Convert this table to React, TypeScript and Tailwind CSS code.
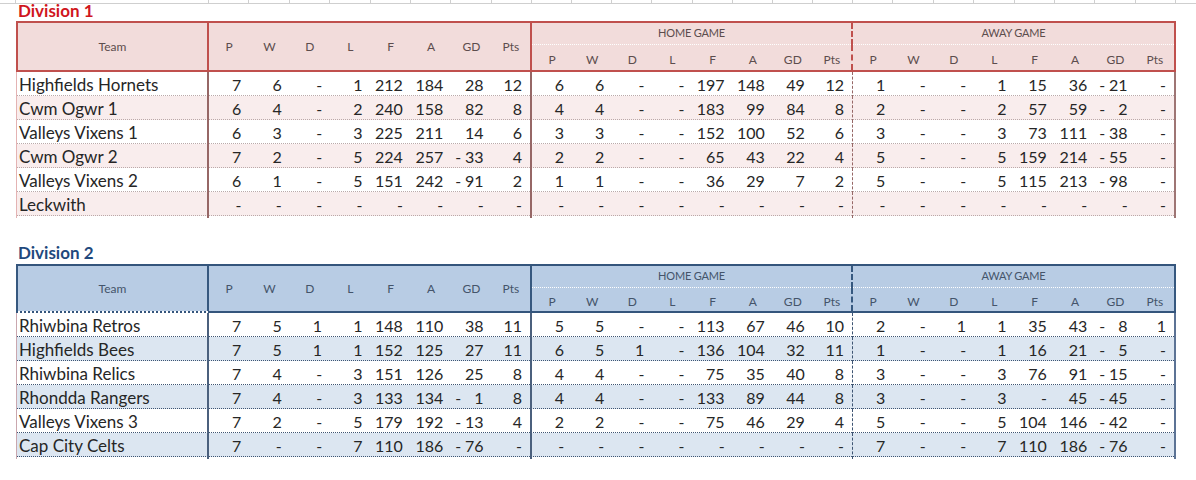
import React from 'react';

type Theme = {
  title: string;
  bar: string;
  teamBar: string;
  headRows: string;
  headBg: string;
  headText: string;
  hBorder: string;
  row: string;
  band: string;
  bLeft: string;
  bSep: string;
  bDash: string;
  bRight: string;
};

type Row = [string, number[]];

const COLS = 'grid-cols-[193px_repeat(8,40.375px)_repeat(8,40.125px)_repeat(8,40.375px)]';
const LEFT = ['P', 'W', 'D', 'L', 'F', 'A', 'GD', 'Pts'];

const red: Theme = {
  title: 'text-[#d0161d]',
  bar: 'bg-[#c0504d]',
  teamBar: 'bg-[#c0504d]',
  headRows: 'grid-rows-[22px_25px]',
  headBg: 'bg-[#f2dcdb]',
  headText: 'text-[#5c4d4d]',
  hBorder: 'border-[#c0504d]',
  row: 'border-[#bba9a9]',
  band: 'bg-[#f9eded]',
  bLeft: 'border-l-[#e4b3b3]',
  bSep: 'border-r-[#966766]',
  bDash: 'border-r-[#966766]',
  bRight: 'border-r-[#9e7574]',
};

const blue: Theme = {
  title: 'text-[#1f497d]',
  bar: 'bg-[#34557c]',
  teamBar: 'bg-[repeating-linear-gradient(90deg,#34557c_0_2px,transparent_2px_4px)]',
  headRows: 'grid-rows-[22px_23px]',
  headBg: 'bg-[#b8cce4]',
  headText: 'text-[#44546a]',
  hBorder: 'border-[#36587f]',
  row: 'border-[#3e5573]',
  band: 'bg-[#dce6f1]',
  bLeft: 'border-l-[#caa7ae]',
  bSep: 'border-r-[#4b607d]',
  bDash: 'border-r-[#3e5573]',
  bRight: 'border-r-[#5c7395]',
};

const division1: Row[] = [
  ['Highfields Hornets', [7, 6, 0, 1, 212, 184, 28, 12, 6, 6, 0, 0, 197, 148, 49, 12, 1, 0, 0, 1, 15, 36, -21, 0]],
  ['Cwm Ogwr 1', [6, 4, 0, 2, 240, 158, 82, 8, 4, 4, 0, 0, 183, 99, 84, 8, 2, 0, 0, 2, 57, 59, -2, 0]],
  ['Valleys Vixens 1', [6, 3, 0, 3, 225, 211, 14, 6, 3, 3, 0, 0, 152, 100, 52, 6, 3, 0, 0, 3, 73, 111, -38, 0]],
  ['Cwm Ogwr 2', [7, 2, 0, 5, 224, 257, -33, 4, 2, 2, 0, 0, 65, 43, 22, 4, 5, 0, 0, 5, 159, 214, -55, 0]],
  ['Valleys Vixens 2', [6, 1, 0, 5, 151, 242, -91, 2, 1, 1, 0, 0, 36, 29, 7, 2, 5, 0, 0, 5, 115, 213, -98, 0]],
  ['Leckwith', Array(24).fill(0)],
];

const division2: Row[] = [
  ['Rhiwbina Retros', [7, 5, 1, 1, 148, 110, 38, 11, 5, 5, 0, 0, 113, 67, 46, 10, 2, 0, 1, 1, 35, 43, -8, 1]],
  ['Highfields Bees', [7, 5, 1, 1, 152, 125, 27, 11, 6, 5, 1, 0, 136, 104, 32, 11, 1, 0, 0, 1, 16, 21, -5, 0]],
  ['Rhiwbina Relics', [7, 4, 0, 3, 151, 126, 25, 8, 4, 4, 0, 0, 75, 35, 40, 8, 3, 0, 0, 3, 76, 91, -15, 0]],
  ['Rhondda Rangers', [7, 4, 0, 3, 133, 134, -1, 8, 4, 4, 0, 0, 133, 89, 44, 8, 3, 0, 0, 3, 0, 45, -45, 0]],
  ['Valleys Vixens 3', [7, 2, 0, 5, 179, 192, -13, 4, 2, 2, 0, 0, 75, 46, 29, 4, 5, 0, 0, 5, 104, 146, -42, 0]],
  ['Cap City Celts', [7, 0, 0, 7, 110, 186, -76, 0, 0, 0, 0, 0, 0, 0, 0, 0, 7, 0, 0, 7, 110, 186, -76, 0]],
];

// accounting-style cell: zero shows "-", negatives put the minus at the left edge
const Num = ({ n }: { n: number }) => {
  if (n === 0) return <span className="ml-auto">-</span>;
  if (n < 0)
    return (
      <>
        <span>-</span>
        <span className="ml-auto">{-n}</span>
      </>
    );
  return <span className="ml-auto">{n}</span>;
};

const Table = ({ t, rows }: { t: Theme; rows: Row[] }) => (
  <div className="ml-4 w-[1160px]">
    <div className={`h-[2px] ${t.bar}`} />
    <div className={`grid ${COLS} ${t.headRows} ${t.headBg} ${t.headText} text-[12px]`}>
      <div className={`row-span-2 flex items-center justify-center border-l-2 border-r-2 ${t.hBorder}`}>Team</div>
      {LEFT.map((h, i) => (
        <div
          key={'l' + h}
          className={`row-span-2 flex items-center justify-center ${i === 7 ? `border-r-2 ${t.hBorder}` : ''}`}
        >
          {h}
        </div>
      ))}
      <div className={`col-span-8 border-r-2 border-dashed ${t.hBorder}`}>
        <div className="flex h-full items-center justify-center border-b border-dotted border-white text-[11px] tracking-[-0.2px]">
          HOME GAME
        </div>
      </div>
      <div className={`col-span-8 border-r-2 ${t.hBorder}`}>
        <div className="flex h-full items-center justify-center border-b border-dotted border-white text-[11px] tracking-[-0.2px]">
          AWAY GAME
        </div>
      </div>
      {LEFT.map((h, i) => (
        <div
          key={'h' + h}
          className={`flex items-center justify-center pt-1 ${i === 7 ? `border-r-2 border-dashed ${t.hBorder}` : ''}`}
        >
          {h}
        </div>
      ))}
      {LEFT.map((h, i) => (
        <div
          key={'a' + h}
          className={`flex items-center justify-center pt-1 ${i === 7 ? `border-r-2 ${t.hBorder}` : ''}`}
        >
          {h}
        </div>
      ))}
    </div>
    <div className="flex h-[2px]">
      <div className={`w-[193px] ${t.teamBar}`} />
      <div className={`flex-1 ${t.bar}`} />
    </div>

    {rows.map(([team, vals], r) => (
      <div
        key={team}
        className={`grid ${COLS} h-6 border-b border-dotted ${t.row} ${r % 2 ? t.band : 'bg-white'} text-[#262626]`}
      >
        <div className={`flex items-center whitespace-nowrap border-l border-r-2 pl-[2px] text-[17px] ${t.bLeft} ${t.bSep}`}>
          {team}
        </div>
        {vals.map((n, i) => (
          <div
            key={i}
            className={`flex items-center pl-[4px] pr-[8px] text-[16px] ${
              i === 7 ? `border-r-2 ${t.bSep}` : i === 15 ? `border-r border-dashed ${t.bDash}` : i === 23 ? `border-r-2 ${t.bRight}` : ''
            }`}
          >
            <Num n={n} />
          </div>
        ))}
      </div>
    ))}
  </div>
);

const App = () => (
  <div className="h-[480px] w-[1196px] overflow-hidden bg-white font-[Lato,sans-serif]">
    <div className="grid h-[4px] grid-cols-[16px_193px_repeat(8,40.375px)_repeat(8,40.125px)_repeat(8,40.375px)_1fr] border-b border-[#cfcfcf]">
      {Array.from({ length: 26 }).map((_, i) => (
        <div key={i} className="border-r border-[#cfcfcf]" />
      ))}
    </div>
    <div className={`h-[17px] pl-[18px] text-[17px] font-bold leading-[13px] ${red.title}`}>Division 1</div>
    <Table t={red} rows={division1} />
    <div className={`mt-[26px] h-[22px] pl-[18px] text-[17px] font-bold leading-[21px] ${blue.title}`}>Division 2</div>
    <Table t={blue} rows={division2} />
  </div>
);

export default App;
